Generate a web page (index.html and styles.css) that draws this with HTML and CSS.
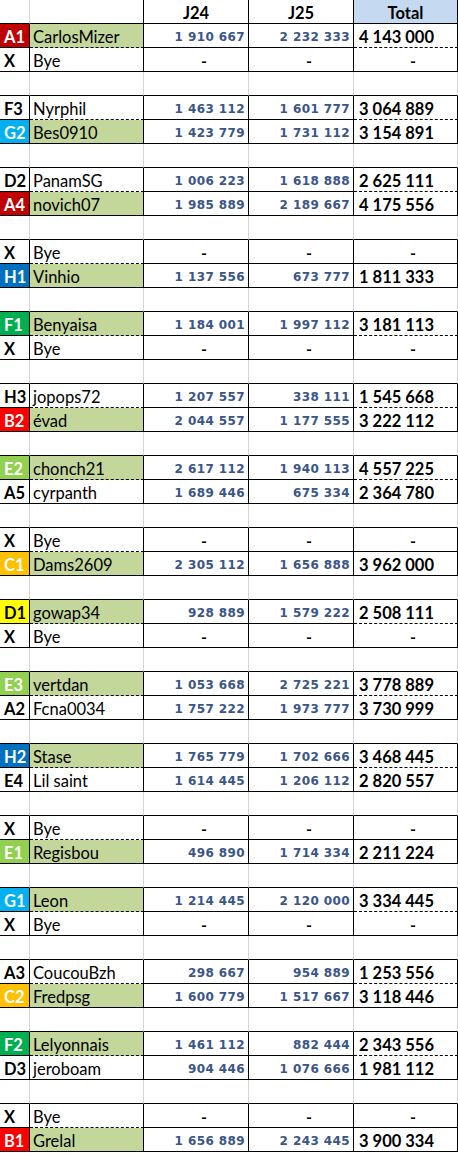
FILE: index.html
```html
<!DOCTYPE html>
<html>
<head>
<meta charset="utf-8">
<link rel="stylesheet" href="styles.css">
</head>
<body>
<div class="sheet">
  <div class="row head"><div class="hc ha"></div><div class="hc"></div><div class="hc h">J24</div><div class="hc h">J25</div><div class="hc h th">Total</div></div>

  <div class="row top"><div class="code ca">A1</div><div class="name hl">CarlosMizer</div><div class="num">1 910 667</div><div class="num">2 232 333</div><div class="tot">4 143 000</div></div>
  <div class="row"><div class="code">X</div><div class="name">Bye</div><div class="dash">-</div><div class="dash">-</div><div class="dash">-</div></div>
  <div class="row spacer"><div></div><div></div><div></div><div></div><div></div></div>

  <div class="row top"><div class="code">F3</div><div class="name">Nyrphil</div><div class="num">1 463 112</div><div class="num">1 601 777</div><div class="tot">3 064 889</div></div>
  <div class="row"><div class="code cg">G2</div><div class="name hl">Bes0910</div><div class="num">1 423 779</div><div class="num">1 731 112</div><div class="tot">3 154 891</div></div>
  <div class="row spacer"><div></div><div></div><div></div><div></div><div></div></div>

  <div class="row top"><div class="code">D2</div><div class="name">PanamSG</div><div class="num">1 006 223</div><div class="num">1 618 888</div><div class="tot">2 625 111</div></div>
  <div class="row"><div class="code ca">A4</div><div class="name hl">novich07</div><div class="num">1 985 889</div><div class="num">2 189 667</div><div class="tot">4 175 556</div></div>
  <div class="row spacer"><div></div><div></div><div></div><div></div><div></div></div>

  <div class="row top"><div class="code">X</div><div class="name">Bye</div><div class="dash">-</div><div class="dash">-</div><div class="dash">-</div></div>
  <div class="row"><div class="code ch">H1</div><div class="name hl">Vinhio</div><div class="num">1 137 556</div><div class="num">673 777</div><div class="tot">1 811 333</div></div>
  <div class="row spacer"><div></div><div></div><div></div><div></div><div></div></div>

  <div class="row top"><div class="code cf">F1</div><div class="name hl">Benyaisa</div><div class="num">1 184 001</div><div class="num">1 997 112</div><div class="tot">3 181 113</div></div>
  <div class="row"><div class="code">X</div><div class="name">Bye</div><div class="dash">-</div><div class="dash">-</div><div class="dash">-</div></div>
  <div class="row spacer"><div></div><div></div><div></div><div></div><div></div></div>

  <div class="row top"><div class="code">H3</div><div class="name">jopops72</div><div class="num">1 207 557</div><div class="num">338 111</div><div class="tot">1 545 668</div></div>
  <div class="row"><div class="code cb">B2</div><div class="name hl">évad</div><div class="num">2 044 557</div><div class="num">1 177 555</div><div class="tot">3 222 112</div></div>
  <div class="row spacer"><div></div><div></div><div></div><div></div><div></div></div>

  <div class="row top"><div class="code ce">E2</div><div class="name hl">chonch21</div><div class="num">2 617 112</div><div class="num">1 940 113</div><div class="tot">4 557 225</div></div>
  <div class="row"><div class="code">A5</div><div class="name">cyrpanth</div><div class="num">1 689 446</div><div class="num">675 334</div><div class="tot">2 364 780</div></div>
  <div class="row spacer"><div></div><div></div><div></div><div></div><div></div></div>

  <div class="row top"><div class="code">X</div><div class="name">Bye</div><div class="dash">-</div><div class="dash">-</div><div class="dash">-</div></div>
  <div class="row"><div class="code cc">C1</div><div class="name hl">Dams2609</div><div class="num">2 305 112</div><div class="num">1 656 888</div><div class="tot">3 962 000</div></div>
  <div class="row spacer"><div></div><div></div><div></div><div></div><div></div></div>

  <div class="row top"><div class="code cd">D1</div><div class="name hl">gowap34</div><div class="num">928 889</div><div class="num">1 579 222</div><div class="tot">2 508 111</div></div>
  <div class="row"><div class="code">X</div><div class="name">Bye</div><div class="dash">-</div><div class="dash">-</div><div class="dash">-</div></div>
  <div class="row spacer"><div></div><div></div><div></div><div></div><div></div></div>

  <div class="row top"><div class="code ce">E3</div><div class="name hl">vertdan</div><div class="num">1 053 668</div><div class="num">2 725 221</div><div class="tot">3 778 889</div></div>
  <div class="row"><div class="code">A2</div><div class="name">Fcna0034</div><div class="num">1 757 222</div><div class="num">1 973 777</div><div class="tot">3 730 999</div></div>
  <div class="row spacer"><div></div><div></div><div></div><div></div><div></div></div>

  <div class="row top"><div class="code ch">H2</div><div class="name hl">Stase</div><div class="num">1 765 779</div><div class="num">1 702 666</div><div class="tot">3 468 445</div></div>
  <div class="row"><div class="code">E4</div><div class="name">Lil saint</div><div class="num">1 614 445</div><div class="num">1 206 112</div><div class="tot">2 820 557</div></div>
  <div class="row spacer"><div></div><div></div><div></div><div></div><div></div></div>

  <div class="row top"><div class="code">X</div><div class="name">Bye</div><div class="dash">-</div><div class="dash">-</div><div class="dash">-</div></div>
  <div class="row"><div class="code ce">E1</div><div class="name hl">Regisbou</div><div class="num">496 890</div><div class="num">1 714 334</div><div class="tot">2 211 224</div></div>
  <div class="row spacer"><div></div><div></div><div></div><div></div><div></div></div>

  <div class="row top"><div class="code cg">G1</div><div class="name hl">Leon</div><div class="num">1 214 445</div><div class="num">2 120 000</div><div class="tot">3 334 445</div></div>
  <div class="row"><div class="code">X</div><div class="name">Bye</div><div class="dash">-</div><div class="dash">-</div><div class="dash">-</div></div>
  <div class="row spacer"><div></div><div></div><div></div><div></div><div></div></div>

  <div class="row top"><div class="code">A3</div><div class="name">CoucouBzh</div><div class="num">298 667</div><div class="num">954 889</div><div class="tot">1 253 556</div></div>
  <div class="row"><div class="code cc">C2</div><div class="name hl">Fredpsg</div><div class="num">1 600 779</div><div class="num">1 517 667</div><div class="tot">3 118 446</div></div>
  <div class="row spacer"><div></div><div></div><div></div><div></div><div></div></div>

  <div class="row top"><div class="code cf">F2</div><div class="name hl">Lelyonnais</div><div class="num">1 461 112</div><div class="num">882 444</div><div class="tot">2 343 556</div></div>
  <div class="row"><div class="code">D3</div><div class="name">jeroboam</div><div class="num">904 446</div><div class="num">1 076 666</div><div class="tot">1 981 112</div></div>
  <div class="row spacer"><div></div><div></div><div></div><div></div><div></div></div>

  <div class="row top"><div class="code">X</div><div class="name">Bye</div><div class="dash">-</div><div class="dash">-</div><div class="dash">-</div></div>
  <div class="row"><div class="code cb1">B1</div><div class="name hl">Grelal</div><div class="num">1 656 889</div><div class="num">2 243 445</div><div class="tot">3 900 334</div></div>
</div>
</body>
</html>
```

FILE: styles.css
```css
html, body {
  margin: 0;
  padding: 0;
  background: #ffffff;
}

body {
  font-family: Lato, "Liberation Sans", sans-serif;
  color: #000000;
}

.sheet {
  width: 458px;
}

.row {
  display: grid;
  grid-template-columns: 30px 114px 105px 105px 104px;
  height: 24px;
}

.row > div {
  box-sizing: border-box;
  border-right: 1px solid #000000;
  border-bottom: 1px solid #000000;
  display: flex;
  align-items: center;
  padding-top: 2px;
  white-space: nowrap;
  overflow: hidden;
}

.head .ha {
  border-right-color: #d4d4d4;
}

.head .h {
  justify-content: center;
  font-weight: 700;
  font-size: 16.5px;
}

.head .th {
  background: #c5d9f1;
}

.spacer > div {
  border-right-color: #d4d4d4;
}

.code {
  font-weight: 700;
  font-size: 16.5px;
  padding-left: 4px;
}

.name {
  font-size: 16.5px;
  padding-left: 3px;
}

.num {
  justify-content: flex-end;
  padding-right: 3px;
  font-family: "DejaVu Sans", Verdana, sans-serif;
  font-weight: 700;
  font-size: 12px;
  letter-spacing: 0.4px;
  color: #3a5588;
}

.tot {
  justify-content: flex-end;
  padding-right: 23px;
  font-weight: 700;
  font-size: 16.5px;
}

.dash {
  justify-content: flex-end;
  padding-right: 41px;
  font-weight: 700;
  font-size: 16px;
}

.top .name,
.top .tot {
  border-bottom-style: dashed;
}

.hl {
  background: #c4d79b;
}

.ca { background: #c00000; color: #ffffff; }
.cb, .cb1 { background: #ff0000; color: #ffffff; }
.cc { background: #ffc000; color: #ffffff; }
.cd { background: #ffff00; color: #000000; }
.ce { background: #92d050; color: #ffffff; }
.cf { background: #00b050; color: #ffffff; }
.cg { background: #00b0f0; color: #ffffff; }
.ch { background: #0070c0; color: #ffffff; }
```
